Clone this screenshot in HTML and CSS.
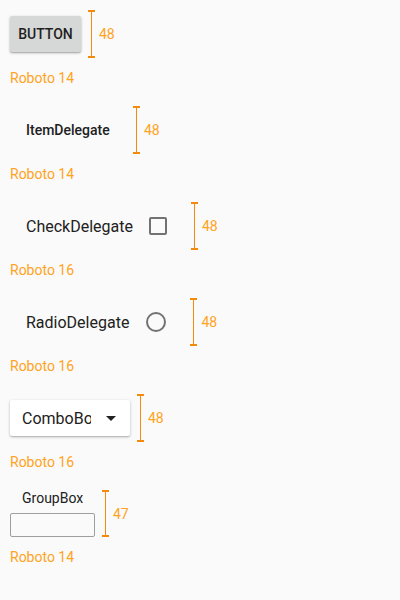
FILE: index.html
```html
<!DOCTYPE html>
<html>
<head>
<meta charset="utf-8">
<link rel="stylesheet" href="styles.css">
</head>
<body>
<div class="page">
  <section class="sample">
    <div class="row">
      <div class="ctl inset"><div class="button">BUTTON</div></div>
      <div class="measure"><span class="bar"></span><span class="num">48</span></div>
    </div>
    <div class="label">Roboto 14</div>
  </section>

  <section class="sample">
    <div class="row">
      <div class="ctl item">ItemDelegate</div>
      <div class="measure"><span class="bar"></span><span class="num">48</span></div>
    </div>
    <div class="label">Roboto 14</div>
  </section>

  <section class="sample">
    <div class="row">
      <div class="ctl delegate check-del"><span>CheckDelegate</span><span class="checkbox"></span></div>
      <div class="measure"><span class="bar"></span><span class="num">48</span></div>
    </div>
    <div class="label">Roboto 16</div>
  </section>

  <section class="sample">
    <div class="row">
      <div class="ctl delegate radio-del"><span>RadioDelegate</span><span class="radio"></span></div>
      <div class="measure"><span class="bar"></span><span class="num">48</span></div>
    </div>
    <div class="label">Roboto 16</div>
  </section>

  <section class="sample">
    <div class="row">
      <div class="ctl inset">
        <div class="combo"><span class="combo-text">ComboBox</span><span class="arrow"></span></div>
      </div>
      <div class="measure"><span class="bar"></span><span class="num">48</span></div>
    </div>
    <div class="label">Roboto 16</div>
  </section>

  <section class="sample">
    <div class="row row47">
      <div class="ctl group">
        <div class="group-title">GroupBox</div>
        <div class="group-frame"></div>
      </div>
      <div class="measure"><span class="bar"></span><span class="num">47</span></div>
    </div>
    <div class="label">Roboto 14</div>
  </section>
</div>
</body>
</html>
```

FILE: styles.css
```css
html, body {
  margin: 0;
  padding: 0;
  background: #fafafa;
}

body {
  font-family: Roboto, "Liberation Sans", sans-serif;
  color: #212121;
  width: 400px;
  height: 600px;
  overflow: hidden;
}

.page {
  padding: 10px 0 0 10px;
}

.sample {
  display: flex;
  flex-direction: column;
  align-items: flex-start;
  margin-bottom: 20px;
}

.row {
  display: flex;
  align-items: center;
  height: 48px;
}

.row47 {
  height: 47px;
}

.ctl {
  height: 100%;
  box-sizing: border-box;
}

.inset {
  padding: 6px 0;
}

.button {
  width: 71px;
  height: 36px;
  background: #d6d7d7;
  border-radius: 2px;
  box-shadow: 0 1px 3px rgba(0, 0, 0, 0.28), 0 1px 1px rgba(0, 0, 0, 0.12);
  font-size: 14px;
  font-weight: 500;
  color: #1f1f1f;
  display: flex;
  align-items: center;
  justify-content: center;
}

.item {
  display: flex;
  align-items: center;
  padding: 0 16px;
  font-size: 14px;
  font-weight: 500;
  width: 116px;
}

.delegate {
  display: flex;
  align-items: center;
  padding: 0 17px 0 16px;
  font-size: 16px;
}

.check-del {
  gap: 16px;
}

.radio-del {
  gap: 17px;
}

.checkbox {
  width: 18px;
  height: 18px;
  box-sizing: border-box;
  border: 2px solid #727272;
  border-radius: 2px;
}

.radio {
  width: 20px;
  height: 20px;
  box-sizing: border-box;
  border: 2px solid #727272;
  border-radius: 50%;
}

.combo {
  width: 120px;
  height: 36px;
  background: #fff;
  border-radius: 2px;
  box-shadow: 0 1px 3px rgba(0, 0, 0, 0.25), 0 1px 1px rgba(0, 0, 0, 0.1);
  display: flex;
  align-items: center;
  padding-left: 12px;
  box-sizing: border-box;
  font-size: 16px;
}

.combo-text {
  width: 69px;
  overflow: hidden;
  white-space: nowrap;
}

.arrow {
  margin-left: 15px;
  width: 0;
  height: 0;
  border-left: 5px solid transparent;
  border-right: 5px solid transparent;
  border-top: 5px solid #222;
}

.group {
  display: flex;
  flex-direction: column;
  align-items: flex-start;
}

.group-title {
  font-size: 14px;
  line-height: 16px;
  padding-left: 12px;
}

.group-frame {
  margin-top: 7px;
  width: 85px;
  height: 24px;
  box-sizing: border-box;
  border: 1px solid #9e9e9e;
  border-radius: 2px;
}

.measure {
  display: flex;
  align-items: center;
  height: 100%;
  margin-left: 7px;
}

.bar {
  width: 7px;
  height: 100%;
  box-sizing: border-box;
  border-top: 2px solid #f5890c;
  border-bottom: 2px solid #f5890c;
  background: linear-gradient(to right, transparent 3px, #f5890c 3px, #f5890c 4px, transparent 4px);
}

.num {
  margin-left: 4px;
  font-size: 14px;
  color: #ffa322;
}

.label {
  margin-top: 12px;
  font-size: 14px;
  line-height: 16px;
  color: #ffa322;
}
```
